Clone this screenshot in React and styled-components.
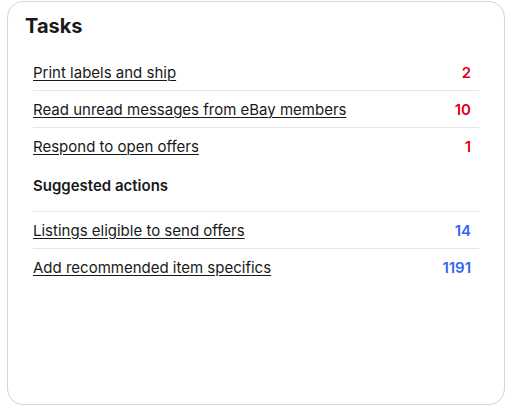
import React from "react";
import styled, { createGlobalStyle } from "styled-components";

const GlobalStyle = createGlobalStyle`
    body {
        margin: 0;
        background: #fff;
        font-family: Inter, "Noto Sans", sans-serif;
        color: #191919;
    }
`

const Card = styled.section`
    box-sizing: border-box;
    margin: 1px 7px 0 7px;
    width: 498px;
    height: 404px;
    border: 1px solid #d6d6d6;
    border-radius: 16px;
    padding: 10px 25px 0 17px;
`

const Title = styled.h2`
    margin: 0 0 14px 0;
    font-size: 20px;
    line-height: 28px;
    font-weight: 700;
`

const List = styled.ul`
    list-style: none;
    margin: 0 0 0 8px;
    padding: 0;
`

const Row = styled.li`
    display: flex;
    align-items: center;
    justify-content: space-between;
    height: 36px;
    padding-right: 8px;
    border-top: ${p => p.$divider ? "1px solid #e5e5e5" : "none"};
`

const TaskLink = styled.a`
    font-size: 15px;
    color: #191919;
    text-decoration: underline;
    text-underline-offset: 2px;
    text-decoration-thickness: 1px;
`

const Count = styled.span`
    font-size: 15px;
    font-weight: 600;
    color: ${p => p.$tone === "blue" ? "#3665f3" : "#e0001b"};
`

const SubHeading = styled.h3`
    margin: 0;
    padding: 12px 0 0 8px;
    height: 35px;
    font-size: 15px;
    line-height: 20px;
    font-weight: 600;
`

const tasks = [
    { label: "Print labels and ship", count: 2 },
    { label: "Read unread messages from eBay members", count: 10 },
    { label: "Respond to open offers", count: 1 },
]

const suggested = [
    { label: "Listings eligible to send offers", count: 14 },
    { label: "Add recommended item specifics", count: 1191 },
]

const App = () => {
    return (
        <>
            <GlobalStyle />
            <Card>
                <Title>Tasks</Title>
                <List>
                    {tasks.map((t, i) => (
                        <Row key={t.label} $divider={i > 0}>
                            <TaskLink href="#">{t.label}</TaskLink>
                            <Count>{t.count}</Count>
                        </Row>
                    ))}
                </List>
                <SubHeading>Suggested actions</SubHeading>
                <List>
                    {suggested.map(s => (
                        <Row key={s.label} $divider>
                            <TaskLink href="#">{s.label}</TaskLink>
                            <Count $tone="blue">{s.count}</Count>
                        </Row>
                    ))}
                </List>
            </Card>
        </>
    )
}

export default App;
